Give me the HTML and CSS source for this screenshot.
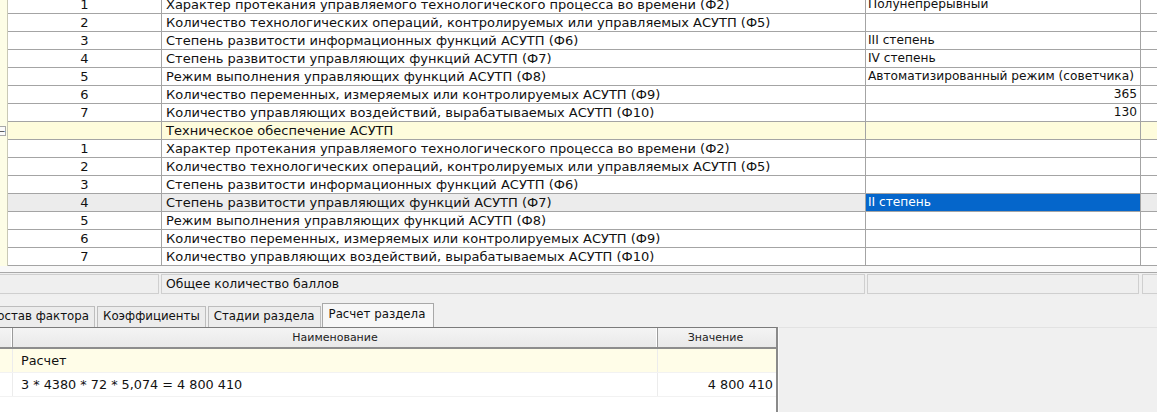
FILE: index.html
```html
<!DOCTYPE html>
<html lang="ru">
<head>
<meta charset="utf-8">
<title>Расчет раздела</title>
<link rel="stylesheet" href="styles.css">
</head>
<body>
<div class="screen">
  <div class="grid-clip">
    <div class="grid">
      <div class="row"><div class="ind"></div><div class="c num">1</div><div class="c name">Характер протекания управляемого технологического процесса во времени (Ф2)</div><div class="c val">Полунепрерывный</div><div class="c ext"></div></div>
      <div class="row"><div class="ind"></div><div class="c num">2</div><div class="c name">Количество технологических операций, контролируемых или управляемых АСУТП (Ф5)</div><div class="c val"></div><div class="c ext"></div></div>
      <div class="row"><div class="ind"></div><div class="c num">3</div><div class="c name">Степень развитости информационных функций АСУТП (Ф6)</div><div class="c val">III степень</div><div class="c ext"></div></div>
      <div class="row"><div class="ind"></div><div class="c num">4</div><div class="c name">Степень развитости управляющих функций АСУТП (Ф7)</div><div class="c val">IV степень</div><div class="c ext"></div></div>
      <div class="row"><div class="ind"></div><div class="c num">5</div><div class="c name">Режим выполнения управляющих функций АСУТП (Ф8)</div><div class="c val">Автоматизированный режим (советчика)</div><div class="c ext"></div></div>
      <div class="row"><div class="ind"></div><div class="c num">6</div><div class="c name">Количество переменных, измеряемых или контролируемых АСУТП (Ф9)</div><div class="c val right">365</div><div class="c ext"></div></div>
      <div class="row"><div class="ind"></div><div class="c num">7</div><div class="c name">Количество управляющих воздействий, вырабатываемых АСУТП (Ф10)</div><div class="c val right">130</div><div class="c ext"></div></div>
      <div class="row group"><div class="ind"><span class="toggle">−</span></div><div class="c num"></div><div class="c name">Техническое обеспечение АСУТП</div><div class="c val"></div><div class="c ext"></div></div>
      <div class="row"><div class="ind"></div><div class="c num">1</div><div class="c name">Характер протекания управляемого технологического процесса во времени (Ф2)</div><div class="c val"></div><div class="c ext"></div></div>
      <div class="row"><div class="ind"></div><div class="c num">2</div><div class="c name">Количество технологических операций, контролируемых или управляемых АСУТП (Ф5)</div><div class="c val"></div><div class="c ext"></div></div>
      <div class="row"><div class="ind"></div><div class="c num">3</div><div class="c name">Степень развитости информационных функций АСУТП (Ф6)</div><div class="c val"></div><div class="c ext"></div></div>
      <div class="row current"><div class="ind"></div><div class="c num">4</div><div class="c name">Степень развитости управляющих функций АСУТП (Ф7)</div><div class="c val selected">II степень</div><div class="c ext"></div></div>
      <div class="row"><div class="ind"></div><div class="c num">5</div><div class="c name">Режим выполнения управляющих функций АСУТП (Ф8)</div><div class="c val"></div><div class="c ext"></div></div>
      <div class="row"><div class="ind"></div><div class="c num">6</div><div class="c name">Количество переменных, измеряемых или контролируемых АСУТП (Ф9)</div><div class="c val"></div><div class="c ext"></div></div>
      <div class="row"><div class="ind"></div><div class="c num">7</div><div class="c name">Количество управляющих воздействий, вырабатываемых АСУТП (Ф10)</div><div class="c val"></div><div class="c ext"></div></div>
    </div>
  </div>
  <div class="gap"></div>
  <div class="footer">
    <div class="fcell f-num"></div>
    <div class="fcell f-name">Общее количество баллов</div>
    <div class="fcell f-val"></div>
    <div class="fcell f-ext"></div>
  </div>
  <div class="panel">
    <div class="tabs">
      <div class="tab first">Состав фактора</div>
      <div class="tab">Коэффициенты</div>
      <div class="tab">Стадии раздела</div>
      <div class="tab active">Расчет раздела</div>
    </div>
    <div class="lower">
      <div class="lgrid">
        <div class="lhead">
          <div class="lh l-ind"></div>
          <div class="lh l-name">Наименование</div>
          <div class="lh l-val">Значение</div>
        </div>
        <div class="lrow yellow">
          <div class="lc l-ind"></div>
          <div class="lc l-name">Расчет</div>
          <div class="lc l-val"></div>
        </div>
        <div class="lrow">
          <div class="lc l-ind"></div>
          <div class="lc l-name">3 * 4380 * 72 * 5,074 = 4 800 410</div>
          <div class="lc l-val right">4 800 410</div>
        </div>
      </div>
      <div class="lside"></div>
    </div>
  </div>
</div>
</body>
</html>
```

FILE: styles.css
```css
* { box-sizing: border-box; }
html, body { margin: 0; padding: 0; }
body {
  width: 1157px;
  height: 412px;
  overflow: hidden;
  background: #f0f0f0;
  font-family: "DejaVu Sans", Verdana, sans-serif;
  font-size: 12px;
  color: #111;
}
.screen { display: flex; flex-direction: column; height: 412px; }

.grid-clip { height: 266px; overflow: hidden; background: #fff; flex: none; }
.grid { margin-top: -4px; font-size: 13px; }
.row { display: flex; height: 18px; }
.ind {
  width: 8px; flex: none;
  background: #fdfde6;
  border-right: 1px solid #c9c9b6;
  position: relative;
}
.c {
  height: 18px;
  border-right: 1px solid #a4a4a4;
  border-bottom: 1px solid #a4a4a4;
  line-height: 17px;
  white-space: nowrap;
  overflow: hidden;
  flex: none;
}
.num { width: 154px; text-align: center; }
.name { width: 704px; padding-left: 4px; }
.val { width: 275px; padding-left: 2px; padding-right: 3px; font-size: 12.2px; }
.ext { flex: 1; border-right: none; }
.right { text-align: right; }
.group .c { background: #fefcdc; }
.current .num, .current .name, .current .ext { background: #ececec; }
.selected {
  background: #0566cb;
  color: #fff;
  padding-left: 2px;
}
.toggle {
  position: absolute;
  left: -3px; top: 4px;
  width: 9px; height: 10px;
  border: 1px solid #a9a9a9;
  background: #fbfbfb;
  font-size: 9px;
  line-height: 8px;
  text-align: right;
  color: #333;
}

.gap { height: 6px; background: #f8f8f8; flex: none; }
.footer {
  display: flex;
  height: 24px;
  border-top: 1px solid #a8a8a8;
  background: #efefef;
  padding: 1px 0 1px;
  font-size: 12.4px;
  flex: none;
}
.fcell {
  height: 20px;
  border: 1px solid #cfcfcf;
  line-height: 18px;
  white-space: nowrap;
}
.f-num { width: 159px; border-left: none; }
.f-name { width: 704px; margin-left: 2px; padding-left: 4px; }
.f-val { width: 272px; margin-left: 2px; }
.f-ext { flex: 1; margin-left: 3px; border-right: none; }

.panel { flex: 1; display: flex; flex-direction: column; padding-top: 7px; background: #f0f0f0; }
.tabs { display: flex; align-items: flex-end; height: 24px; margin-left: -17px; gap: 2px; flex: none; font-size: 11.8px; position: relative; z-index: 1; }
.tab {
  height: 21px;
  padding: 0 5px;
  border: 1px solid #bdbdbd;
  border-bottom: none;
  background: #ececec;
  line-height: 19px;
  white-space: nowrap;
}
.tab.active {
  height: 24px;
  background: #f7f7f7;
  border-color: #a8a8a8;
  margin-left: -1px;
  line-height: 21px;
  padding: 0 8px 0 6px;
}
.lower { flex: 1; display: flex; }
.lgrid {
  width: 778px;
  background: #fff;
  border-top: 1px solid #7b7b7b;
  border-right: 2px solid #8a8a8a;
  flex: none;
}
.lhead {
  display: flex;
  height: 21px;
  background: linear-gradient(#f4f4f4, #e9e9e9);
  border-bottom: 2px solid #8d8d8d;
  font-size: 11px;
  line-height: 19px;
}
.lh { border-right: 1px solid #9a9a9a; box-shadow: inset -1px 0 0 #fff; text-align: center; color: #222; }
.l-ind { width: 13px; flex: none; }
.l-name { width: 645px; flex: none; padding-left: 8px; }
.lhead .l-name { padding-left: 0; }
.l-val { flex: 1; border-right: none; padding-right: 3px; }
.lhead .l-val { border-right: none; box-shadow: none; }
.lrow { display: flex; height: 24px; line-height: 23px; border-bottom: 1px solid #f2f2f2; font-size: 12.8px; }
.lrow.yellow { background: #fffde8; }
.lc { border-right: 1px solid #ececec; white-space: nowrap; }
.lc.l-val { border-right: none; }
.lside { flex: 1; background: #f0f0f0; border-top: 1px solid #e2e2e2; border-left: 1px solid #fafafa; }
```
